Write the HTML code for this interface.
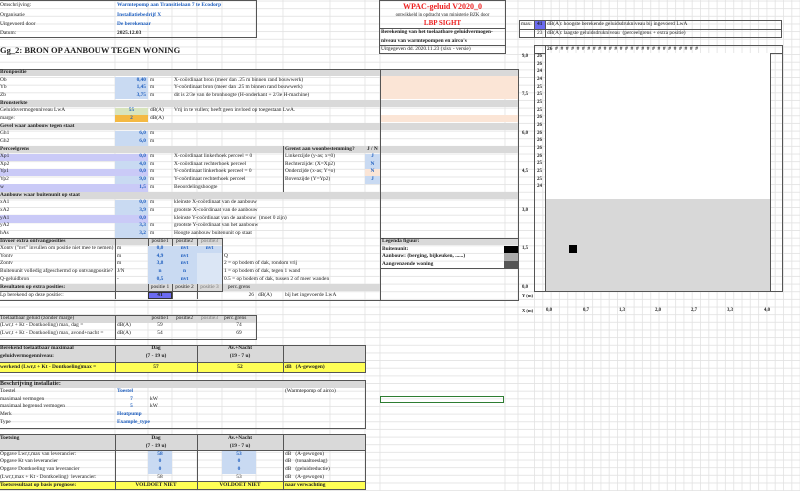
<!DOCTYPE html><html><head><meta charset="utf-8"><style>
body{margin:0;width:800px;height:491px;overflow:hidden;background:#fff;position:relative;font-family:"Liberation Serif",serif;font-size:5.4px;color:#222}
.t{position:absolute;white-space:nowrap;line-height:7px}
.b{font-weight:bold}.bl{color:#1f5fbf;font-weight:bold}
.r{position:absolute}
.g{background:#d9d9d9}.v{background:#c9daf2}.p{background:#cacaf7}.pe{background:#fbe5d6}.y{background:#ffff55}
.c{text-align:center}.rt{text-align:right}
.bx{position:absolute;border:1px solid #555;box-sizing:border-box}
</style></head><body>
<svg class="r" style="left:0;top:0" width="800" height="491">
<defs><pattern id="h" width="800" height="7.65" patternUnits="userSpaceOnUse" y="0.5"><line x1="0" y1="0.5" x2="800" y2="0.5" stroke="#e2e2e2" stroke-width="0.8"/></pattern>
<pattern id="vv" x="534" width="8.3" height="491" patternUnits="userSpaceOnUse"><line x1="0.5" y1="0" x2="0.5" y2="491" stroke="#e2e2e2" stroke-width="0.8"/></pattern></defs>
<rect width="800" height="491" fill="url(#h)"/>
<rect x="534" width="266" height="491" fill="url(#vv)"/>
<g stroke="#e2e2e2" stroke-width="0.8">
<line x1="115" y1="0" x2="115" y2="491"/><line x1="148" y1="0" x2="148" y2="491"/><line x1="172" y1="0" x2="172" y2="491"/><line x1="197" y1="0" x2="197" y2="491"/><line x1="222" y1="0" x2="222" y2="491"/><line x1="256" y1="0" x2="256" y2="491"/><line x1="283" y1="0" x2="283" y2="491"/><line x1="330" y1="0" x2="330" y2="491"/><line x1="365" y1="0" x2="365" y2="491"/><line x1="380" y1="0" x2="380" y2="491"/><line x1="505" y1="0" x2="505" y2="491"/><line x1="518" y1="0" x2="518" y2="491"/></g></svg>

<!-- top header -->
<div class="bx" style="left:-1px;top:0;width:258px;height:38px"></div>
<div class="t" style="left:0;top:2px">Omschrijving:</div><div class="t bl" style="left:117px;top:2px">Warmtepomp aan Transitielaan 7 te Ecodorp</div>
<div class="t" style="left:0;top:12px">Organisatie</div><div class="t bl" style="left:117px;top:12px">Installatiebedrijf X</div>
<div class="t" style="left:0;top:21px">Uitgevoerd door</div><div class="t bl" style="left:117px;top:21px">De berekenaar</div>
<div class="t" style="left:0;top:30px">Datum:</div><div class="t b" style="left:117px;top:30px">2025.12.03</div>
<div class="t b" style="left:0;top:45px;font-size:8.5px;line-height:10px">Gg_2: BRON OP AANBOUW TEGEN WONING</div>

<div class="bx" style="left:379px;top:0;width:127px;height:54px"></div>
<div class="t b c" style="left:380px;top:2px;width:125px;color:#e22;font-size:8px;line-height:9px">WPAC-geluid V2020_0</div>
<div class="t c" style="left:380px;top:12px;width:125px;font-size:4.8px">ontwikkeld in opdracht van ministerie BZK door</div>
<div class="t b c" style="left:380px;top:20px;width:125px;color:#e22;font-size:7px">LBP SIGHT</div>
<div class="r" style="left:380px;top:28px;width:125px;border-top:1px solid #555"></div>
<div class="t b" style="left:381px;top:29px">Berekening van het toelaatbare geluidvermogen-</div>
<div class="t b" style="left:381px;top:38px">niveau van warmtepompen en airco's</div>
<div class="r" style="left:380px;top:45px;width:125px;border-top:1px solid #555"></div>
<div class="t" style="left:381px;top:46px">Uitgegeven dd. 2020.11.23 (xlsx - versie)</div>

<div class="bx" style="left:519px;top:20px;width:263px;height:18px"></div>
<div class="r" style="left:519px;top:29px;width:263px;border-top:1px solid #555"></div>
<div class="r" style="left:534px;top:20px;height:18px;border-left:1px solid #555"></div>
<div class="r" style="left:545px;top:20px;height:18px;border-left:1px solid #555"></div>
<div class="r" style="left:535px;top:21px;width:10px;height:8px;background:#6b6bf0"></div>
<div class="t" style="left:521px;top:21px">max:</div><div class="t b" style="left:537px;top:21px">41</div>
<div class="t" style="left:547px;top:21px">dB(A): hoogste berekende geluidsdrukniveau bij ingevoerd LwA</div>
<div class="t" style="left:537px;top:30px">23</div>
<div class="t" style="left:547px;top:30px">dB(A): laagste geluidsdrukniveau &nbsp;(perceelgrens + extra positie)</div>

<!-- chart -->
<div class="bx" style="left:534px;top:45px;width:249px;height:247px"></div>
<div class="r" style="left:534px;top:53px;width:249px;border-top:1px solid #555"></div>
<div class="r" style="left:545px;top:45px;height:247px;border-left:1px solid #555"></div>
<div class="r" style="left:546px;top:53px;width:224px;height:238px;background:#fff;border-right:1px solid #555"></div>
<div class="r" style="left:546px;top:199px;width:224px;height:92px;background:#d8d8d8"></div>
<div class="r" style="left:569px;top:245px;width:8px;height:8px;background:#000"></div>
<div class="t b" style="left:547px;top:46px;letter-spacing:0">26 &nbsp;# &nbsp;# &nbsp;# &nbsp;# &nbsp;# &nbsp;# &nbsp;# &nbsp;# &nbsp;# &nbsp;# &nbsp;# &nbsp;# &nbsp;# &nbsp;# &nbsp;# &nbsp;# &nbsp;# &nbsp;# &nbsp;# &nbsp;# &nbsp;# &nbsp;# &nbsp;# &nbsp;# &nbsp;# &nbsp;# &nbsp;#</div>
<div class="t b" style="left:537px;top:53px;line-height:7.65px;font-size:5px">26<br>26<br>24<br>24<br>25<br>25<br>25<br>25<br>26<br>26<br>26<br>26<br>26<br>26<br>25<br>25<br>25<br>24</div>
<div class="t b" style="left:522px;top:53px;font-size:4.8px">9,0</div>
<div class="t b" style="left:522px;top:91px;font-size:4.8px">7,5</div>
<div class="t b" style="left:522px;top:130px;font-size:4.8px">6,0</div>
<div class="t b" style="left:522px;top:168px;font-size:4.8px">4,5</div>
<div class="t b" style="left:522px;top:207px;font-size:4.8px">3,0</div>
<div class="t b" style="left:522px;top:245px;font-size:4.8px">1,5</div>
<div class="t b" style="left:522px;top:284px;font-size:4.8px">0,0</div>
<div class="t b" style="left:522px;top:292px;font-size:4.5px">Y (m)</div>
<div class="t b" style="left:522px;top:307px;font-size:4.5px">X (m)</div>
<div class="t b" style="left:546px;top:307px;font-size:4.8px">0,0</div><div class="t b" style="left:583px;top:307px;font-size:4.8px">0,7</div><div class="t b" style="left:619px;top:307px;font-size:4.8px">1,3</div><div class="t b" style="left:655px;top:307px;font-size:4.8px">2,0</div><div class="t b" style="left:691px;top:307px;font-size:4.8px">2,7</div><div class="t b" style="left:727px;top:307px;font-size:4.8px">3,3</div><div class="t b" style="left:764px;top:307px;font-size:4.8px">4,0</div>

<!-- section bars -->
<div class="r g" style="left:0;top:69px;width:518px;height:7px"></div>
<div class="r pe" style="left:380px;top:76px;width:138px;height:23px"></div>
<div class="r g" style="left:0;top:100px;width:518px;height:7px"></div>
<div class="r pe" style="left:380px;top:115px;width:138px;height:7px"></div>
<div class="r g" style="left:0;top:123px;width:518px;height:7px"></div>
<div class="r g" style="left:0;top:146px;width:283px;height:7px"></div>
<div class="r g" style="left:283px;top:146px;width:235px;height:7px"></div>
<div class="r g" style="left:0;top:192px;width:518px;height:7px"></div>
<div class="r g" style="left:0;top:238px;width:222px;height:7px"></div>
<div class="r g" style="left:380px;top:238px;width:138px;height:7px"></div>
<div class="r g" style="left:0;top:284px;width:380px;height:7px"></div>
<div class="r" style="left:380px;top:69px;height:232px;border-left:1px solid #555"></div>
<div class="r" style="left:518px;top:69px;height:232px;border-left:1px solid #555"></div>
<div class="r" style="left:0;top:69px;width:518px;border-top:1px solid #555"></div>
<div class="r" style="left:0;top:300px;width:518px;border-top:1px solid #555"></div>

<!-- bron -->
<div class="t b" style="left:0;top:69px">Bronpositie</div>
<div class="r v" style="left:115px;top:77px;width:33px;height:22px"></div>
<div class="t" style="left:0;top:77px">Ob</div><div class="t bl rt" style="left:115px;top:77px;width:31px">0,40</div><div class="t" style="left:150px;top:77px">m</div><div class="t" style="left:174px;top:77px">X-coördinaat bron (meer dan .25 m binnen rand bouwwerk)</div>
<div class="t" style="left:0;top:84px">Yb</div><div class="t bl rt" style="left:115px;top:84px;width:31px">1,45</div><div class="t" style="left:150px;top:84px">m</div><div class="t" style="left:174px;top:84px">Y-coördinaat bron (meer dan .25 m binnen rand bouwwerk)</div>
<div class="t" style="left:0;top:92px">Zb</div><div class="t bl rt" style="left:115px;top:92px;width:31px">3,75</div><div class="t" style="left:150px;top:92px">m</div><div class="t" style="left:174px;top:92px">dit is 2/3e van de bronhoogte (H-onderkant + 2/3e H-machine)</div>
<div class="t b" style="left:0;top:100px">Bronsterkte</div>
<div class="r" style="left:115px;top:108px;width:33px;height:7px;background:#d8e4bc"></div>
<div class="r" style="left:115px;top:115px;width:33px;height:7px;background:#f4b942"></div>
<div class="t" style="left:0;top:107px">Geluidsvermogenniveau LwA</div><div class="t bl c" style="left:115px;top:107px;width:33px">55</div><div class="t" style="left:150px;top:107px">dB(A)</div><div class="t" style="left:174px;top:107px">Vrij in te vullen; heeft geen invloed op toegestaan LwA.</div>
<div class="t" style="left:0;top:115px">marge:</div><div class="t bl c" style="left:115px;top:115px;width:33px">2</div><div class="t" style="left:150px;top:115px">dB(A)</div>
<div class="t b" style="left:0;top:123px">Gevel waar aanbouw tegen staat</div>
<div class="r v" style="left:115px;top:131px;width:33px;height:15px"></div>
<div class="t" style="left:0;top:130px">Gh1</div><div class="t bl rt" style="left:115px;top:130px;width:31px">6,0</div><div class="t" style="left:150px;top:130px">m</div>
<div class="t" style="left:0;top:138px">Gh2</div><div class="t bl rt" style="left:115px;top:138px;width:31px">6,0</div><div class="t" style="left:150px;top:138px">m</div>

<!-- perceel -->
<div class="t b" style="left:0;top:146px">Perceelgrens</div><div class="t b" style="left:285px;top:146px">Grenst aan woonbestemming?</div><div class="t b" style="left:367px;top:146px">J / N</div>
<div class="r p" style="left:0;top:154px;width:148px;height:7px"></div><div class="r v" style="left:115px;top:161px;width:33px;height:8px"></div>
<div class="r p" style="left:0;top:169px;width:148px;height:7px"></div><div class="r v" style="left:115px;top:176px;width:33px;height:8px"></div>
<div class="r p" style="left:0;top:184px;width:148px;height:8px"></div>
<div class="r v" style="left:365px;top:154px;width:15px;height:15px"></div><div class="r pe" style="left:365px;top:169px;width:15px;height:7px"></div><div class="r v" style="left:365px;top:176px;width:15px;height:8px"></div>
<div class="r" style="left:283px;top:146px;height:46px;border-left:1px solid #555"></div>
<div class="t" style="left:0;top:153px">Xp1</div><div class="t bl rt" style="left:115px;top:153px;width:31px">0,0</div><div class="t" style="left:150px;top:153px">m</div><div class="t" style="left:174px;top:153px">X-coördinaat linkerhoek perceel = 0</div><div class="t" style="left:285px;top:153px">Linkerzijde (y-as; x=0)</div><div class="t bl c" style="left:365px;top:153px;width:15px">J</div>
<div class="t" style="left:0;top:161px">Xp2</div><div class="t bl rt" style="left:115px;top:161px;width:31px">4,0</div><div class="t" style="left:150px;top:161px">m</div><div class="t" style="left:174px;top:161px">X-coördinaat rechterhoek perceel</div><div class="t" style="left:285px;top:161px">Rechterzijde: (X=Xp2)</div><div class="t bl c" style="left:365px;top:161px;width:15px">N</div>
<div class="t" style="left:0;top:168px">Yp1</div><div class="t bl rt" style="left:115px;top:168px;width:31px">0,0</div><div class="t" style="left:150px;top:168px">m</div><div class="t" style="left:174px;top:168px">Y-coördinaat linkerhoek perceel = 0</div><div class="t" style="left:285px;top:168px">Onderzijde (x-as; Y=o)</div><div class="t bl c" style="left:365px;top:168px;width:15px">N</div>
<div class="t" style="left:0;top:176px">Yp2</div><div class="t bl rt" style="left:115px;top:176px;width:31px">9,0</div><div class="t" style="left:150px;top:176px">m</div><div class="t" style="left:174px;top:176px">Y-coördinaat rechterhoek perceel</div><div class="t" style="left:285px;top:176px">Bovenzijde (Y=Yp2)</div><div class="t bl c" style="left:365px;top:176px;width:15px">J</div>
<div class="t" style="left:0;top:184px">w</div><div class="t bl rt" style="left:115px;top:184px;width:31px">1,5</div><div class="t" style="left:150px;top:184px">m</div><div class="t" style="left:174px;top:184px">Beoordelingshoogte</div>

<!-- aanbouw -->
<div class="t b" style="left:0;top:192px">Aanbouw waar buitenunit op staat</div>
<div class="r v" style="left:115px;top:200px;width:33px;height:15px"></div><div class="r p" style="left:0;top:215px;width:148px;height:8px"></div><div class="r v" style="left:115px;top:223px;width:33px;height:15px"></div>
<div class="t" style="left:0;top:199px">xA1</div><div class="t bl rt" style="left:115px;top:199px;width:31px">0,0</div><div class="t" style="left:150px;top:199px">m</div><div class="t" style="left:174px;top:199px">kleinste X-coördinaat van de aanbouw</div>
<div class="t" style="left:0;top:207px">xA2</div><div class="t bl rt" style="left:115px;top:207px;width:31px">3,9</div><div class="t" style="left:150px;top:207px">m</div><div class="t" style="left:174px;top:207px">grootste X-coördinaat van de aanbouw</div>
<div class="t" style="left:0;top:215px">yA1</div><div class="t bl rt" style="left:115px;top:215px;width:31px">0,0</div><div class="t" style="left:174px;top:215px">kleinste Y-coördinaat van de aanbouw &nbsp;(moet 0 zijn)</div>
<div class="t" style="left:0;top:222px">yA2</div><div class="t bl rt" style="left:115px;top:222px;width:31px">3,3</div><div class="t" style="left:150px;top:222px">m</div><div class="t" style="left:174px;top:222px">grootste Y-coördinaat van het aanbouw</div>
<div class="t" style="left:0;top:230px">hAs</div><div class="t bl rt" style="left:115px;top:230px;width:31px">3,2</div><div class="t" style="left:150px;top:230px">m</div><div class="t" style="left:174px;top:230px">Hoogte aanbouw buitenunit op staat</div>

<!-- extra posities -->
<div class="bx" style="left:-1px;top:238px;width:224px;height:54px"></div>
<div class="r" style="left:115px;top:238px;height:61px;border-left:1px solid #555"></div>
<div class="r" style="left:148px;top:238px;height:61px;border-left:1px solid #555"></div>
<div class="r" style="left:172px;top:238px;height:61px;border-left:1px solid #555"></div>
<div class="r" style="left:197px;top:238px;height:61px;border-left:1px solid #555"></div>
<div class="r v" style="left:148px;top:246px;width:74px;height:7px"></div>
<div class="r v" style="left:148px;top:253px;width:49px;height:31px"></div><div class="r v" style="left:197px;top:253px;width:25px;height:31px;background:#dbe6f5"></div>
<div class="t b" style="left:0;top:238px">Invoer extra ontvangposities</div><div class="t c" style="left:148px;top:238px;width:24px">positie1</div><div class="t c" style="left:172px;top:238px;width:25px">positie2</div><div class="t c" style="left:197px;top:238px;width:25px;color:#777">positie3</div>
<div class="t" style="left:0;top:245px">Xontv ("nvt" invullen om positie niet mee te nemen)</div><div class="t" style="left:117px;top:245px">m</div><div class="t bl c" style="left:148px;top:245px;width:24px">0,0</div><div class="t bl c" style="left:172px;top:245px;width:25px">nvt</div><div class="t bl c" style="left:197px;top:245px;width:25px">nvt</div>
<div class="t" style="left:0;top:253px">Yontv</div><div class="t" style="left:117px;top:253px">m</div><div class="t bl c" style="left:148px;top:253px;width:24px">4,9</div><div class="t bl c" style="left:172px;top:253px;width:25px">nvt</div><div class="t" style="left:224px;top:253px">Q</div>
<div class="t" style="left:0;top:260px">Zontv</div><div class="t" style="left:117px;top:260px">m</div><div class="t bl c" style="left:148px;top:260px;width:24px">3,8</div><div class="t bl c" style="left:172px;top:260px;width:25px">nvt</div><div class="t" style="left:224px;top:260px">2 = op bodem of dak, rondom vrij</div>
<div class="t" style="left:0;top:268px">Buitenunit volledig afgeschermd op ontvangpositie?</div><div class="t" style="left:117px;top:268px">J/N</div><div class="t bl c" style="left:148px;top:268px;width:24px">n</div><div class="t bl c" style="left:172px;top:268px;width:25px">n</div><div class="t" style="left:224px;top:268px">1 = op bodem of dak, tegen 1 wand</div>
<div class="t" style="left:0;top:276px">Q-geluidbron</div><div class="t" style="left:117px;top:276px">-</div><div class="t bl c" style="left:148px;top:276px;width:24px">0,5</div><div class="t bl c" style="left:172px;top:276px;width:25px">nvt</div><div class="t" style="left:224px;top:276px">0.5 = op bodem of dak, tussen 2 of meer wanden</div>
<div class="t b" style="left:0;top:284px">Resultaten op extra posities:</div><div class="t c" style="left:148px;top:284px;width:24px">positie 1</div><div class="t c" style="left:172px;top:284px;width:25px">positie 2</div><div class="t c" style="left:197px;top:284px;width:25px;color:#777">positie 3</div><div class="t c" style="left:222px;top:284px;width:34px">perc.grens</div>
<div class="r" style="left:148px;top:292px;width:24px;height:7px;background:#6b6bf0;border:1px solid #333;box-sizing:border-box"></div>
<div class="t" style="left:0;top:292px">Lp berekend op deze positie::</div><div class="t b c" style="left:148px;top:292px;width:24px">41</div><div class="t" style="left:224px;top:292px;width:30px;text-align:right">26</div><div class="t" style="left:258px;top:292px">dB(A)</div><div class="t" style="left:285px;top:292px">bij het ingevoerde LwA</div>

<!-- legend -->
<div class="bx" style="left:380px;top:238px;width:139px;height:31px"></div>
<div class="t b" style="left:382px;top:238px">Legenda figuur:</div>
<div class="t b" style="left:382px;top:246px">Buitenunit:</div><div class="r" style="left:504px;top:246px;width:14px;height:7px;background:#000"></div>
<div class="t b" style="left:382px;top:253px">Aanbouw: (berging, bijkeuken, ......)</div><div class="r" style="left:504px;top:253px;width:14px;height:8px;background:#aaa"></div>
<div class="t b" style="left:382px;top:261px">Aangrenzende woning</div><div class="r" style="left:504px;top:261px;width:14px;height:8px;background:#555"></div>

<!-- toelaatbaar -->
<div class="bx" style="left:-1px;top:315px;width:258px;height:25px"></div>
<div class="r g" style="left:0;top:316px;width:256px;height:7px"></div>
<div class="r" style="left:115px;top:315px;height:25px;border-left:1px solid #555"></div>
<div class="t" style="left:0;top:315px">Toelaatbaar geluid (zonder marge)</div><div class="t c" style="left:148px;top:315px;width:24px">positie1</div><div class="t c" style="left:172px;top:315px;width:25px">positie2</div><div class="t c" style="left:197px;top:315px;width:25px;color:#777">positie3</div><div class="t" style="left:224px;top:315px">perc.grens</div>
<div class="t" style="left:0;top:322px">(Lwr,t + Kt - Dontkoeling) max, dag =</div><div class="t" style="left:117px;top:322px">dB(A)</div><div class="t c" style="left:148px;top:322px;width:24px">59</div><div class="t c" style="left:222px;top:322px;width:34px">74</div>
<div class="t" style="left:0;top:330px">(Lwr,t + Kt - Dontkoeling) max, avond+nacht =</div><div class="t" style="left:117px;top:330px">dB(A)</div><div class="t c" style="left:148px;top:330px;width:24px">54</div><div class="t c" style="left:222px;top:330px;width:34px">69</div>

<!-- berekend -->
<div class="bx" style="left:-1px;top:345px;width:367px;height:28px"></div>
<div class="r g" style="left:0;top:346px;width:365px;height:16px"></div>
<div class="r y" style="left:0;top:362px;width:365px;height:10px"></div>
<div class="r" style="left:115px;top:345px;height:28px;border-left:1px solid #555"></div>
<div class="r" style="left:197px;top:345px;height:28px;border-left:1px solid #555"></div>
<div class="r" style="left:283px;top:345px;height:28px;border-left:1px solid #555"></div>
<div class="r" style="left:0;top:362px;width:365px;border-top:1px solid #555"></div>
<div class="t b" style="left:0;top:345px">Berekend toelaatbaar maximaal</div><div class="t b" style="left:0;top:353px">geluidvermogenniveau:</div>
<div class="t b c" style="left:115px;top:345px;width:82px">Dag</div><div class="t b c" style="left:115px;top:353px;width:82px">(7 - 19 u)</div>
<div class="t b c" style="left:197px;top:345px;width:86px">Av.+Nacht</div><div class="t b c" style="left:197px;top:353px;width:86px">(19 - 7 u)</div>
<div class="t b" style="left:0;top:364px">werkend (Lwr,t + Kt - Dontkoeling)max =</div><div class="t b c" style="left:115px;top:364px;width:82px">57</div><div class="t b c" style="left:197px;top:364px;width:86px">52</div><div class="t b" style="left:285px;top:364px">dB &nbsp;&nbsp;(A-gewogen)</div>

<!-- beschrijving -->
<div class="bx" style="left:-1px;top:380px;width:367px;height:49px"></div>
<div class="r g" style="left:0;top:381px;width:365px;height:7px"></div>
<div class="t b" style="left:0;top:381px;font-size:6px">Beschrijving installatie:</div>
<div class="t" style="left:0;top:388px">Toestel</div><div class="t bl" style="left:117px;top:388px">Toestel</div><div class="t" style="left:285px;top:388px">(Warmtepomp of airco)</div>
<div class="t" style="left:0;top:396px">maximaal vermogen</div><div class="t bl c" style="left:115px;top:396px;width:33px">7</div><div class="t" style="left:150px;top:396px">kW</div>
<div class="t" style="left:0;top:403px">maximaal begrensd vermogen</div><div class="t bl c" style="left:115px;top:403px;width:33px">5</div><div class="t" style="left:150px;top:403px">kW</div>
<div class="t" style="left:0;top:411px">Merk</div><div class="t bl" style="left:117px;top:411px">Heatpump</div>
<div class="t" style="left:0;top:419px">Type</div><div class="t bl" style="left:117px;top:419px">Example_type</div>
<div class="r" style="left:380px;top:396px;width:124px;height:7px;border:1px solid #2e7d32;box-sizing:border-box"></div>

<!-- toetsing -->
<div class="bx" style="left:-1px;top:434px;width:367px;height:56px"></div>
<div class="r g" style="left:0;top:435px;width:365px;height:15px"></div>
<div class="r y" style="left:0;top:481px;width:365px;height:8px"></div>
<div class="r" style="left:115px;top:434px;height:56px;border-left:1px solid #555"></div>
<div class="r" style="left:197px;top:434px;height:56px;border-left:1px solid #555"></div>
<div class="r" style="left:283px;top:434px;height:56px;border-left:1px solid #555"></div>
<div class="r" style="left:0;top:450px;width:365px;border-top:1px solid #555"></div>
<div class="r" style="left:0;top:481px;width:365px;border-top:1px solid #555"></div>
<div class="r v" style="left:148px;top:451px;width:24px;height:23px"></div><div class="r v" style="left:222px;top:451px;width:34px;height:23px"></div>
<div class="t b" style="left:0;top:435px">Toetsing</div>
<div class="t b c" style="left:115px;top:435px;width:82px">Dag</div><div class="t b c" style="left:115px;top:443px;width:82px">(7 - 19 u)</div>
<div class="t b c" style="left:197px;top:435px;width:86px">Av.+Nacht</div><div class="t b c" style="left:197px;top:443px;width:86px">(19 - 7 u)</div>
<div class="t" style="left:0;top:451px">Opgave Lwr,t,max van leverancier:</div><div class="t bl c" style="left:148px;top:451px;width:24px">58</div><div class="t bl c" style="left:222px;top:451px;width:34px">53</div><div class="t" style="left:285px;top:451px">dB &nbsp;&nbsp;(A-gewogen)</div>
<div class="t" style="left:0;top:458px">Opgave Kt van leverancier</div><div class="t bl c" style="left:148px;top:458px;width:24px">0</div><div class="t bl c" style="left:222px;top:458px;width:34px">0</div><div class="t" style="left:285px;top:458px">dB &nbsp;&nbsp;(tonaaltoeslag)</div>
<div class="t" style="left:0;top:466px">Opgave Dontkoeling van leverancier</div><div class="t bl c" style="left:148px;top:466px;width:24px">0</div><div class="t bl c" style="left:222px;top:466px;width:34px">0</div><div class="t" style="left:285px;top:466px">dB &nbsp;&nbsp;(geluidreductie)</div>
<div class="t" style="left:0;top:474px">(Lwr,t,max + Kt - Dontkoeling) &nbsp;leverancier:</div><div class="t c" style="left:148px;top:474px;width:24px">58</div><div class="t c" style="left:222px;top:474px;width:34px">53</div><div class="t" style="left:285px;top:474px">dB &nbsp;&nbsp;(A-gewogen)</div>
<div class="t b" style="left:0;top:482px">Toetsresultaat op basis prognose:</div><div class="t b c" style="left:115px;top:482px;width:82px">VOLDOET NIET</div><div class="t b c" style="left:197px;top:482px;width:86px">VOLDOET NIET</div><div class="t b" style="left:285px;top:482px">naar verwachting</div>
</body></html>
